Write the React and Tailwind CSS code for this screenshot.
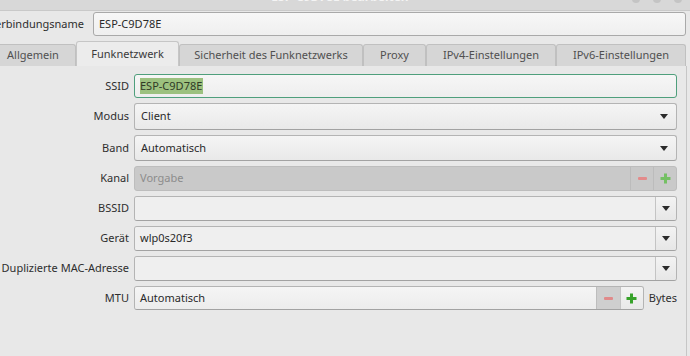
import React from "react";

const font = { fontFamily: '"Noto Sans", "DejaVu Sans", sans-serif' };

function Arrow() {
  return (
    <svg width="8" height="5" viewBox="0 0 8 5" className="block">
      <path d="M0 0H8L4 5Z" fill="#2b2b2b" />
    </svg>
  );
}

function Minus({ color }) {
  return <div className={`w-[9px] h-[3px] rounded-[1px] ${color}`} />;
}

function Plus({ color }) {
  return (
    <svg width="11" height="11" viewBox="0 0 11 11" className="block">
      <path d="M4 0.5h3v3.5h3.5v3H7v3.5H4V7H0.5V4H4Z" fill={color} />
    </svg>
  );
}

function Label({ children }) {
  return (
    <div className="flex justify-end items-center whitespace-nowrap text-[11px] text-[#2e2e2e]">
      {children}
    </div>
  );
}

function Combo({ value }) {
  return (
    <div className="flex items-center h-full rounded-[3px] border border-[#b4b4b4] border-b-[#a2a2a2] bg-gradient-to-b from-[#f5f5f5] to-[#e9e9e9] pl-[6px] pr-[8px]">
      <span className="flex-1 text-[11px] text-[#2a2a2a]">{value}</span>
      <Arrow />
    </div>
  );
}

function ComboEntry({ value }) {
  return (
    <div className="flex h-full rounded-[3px] border border-[#b4b4b4] border-b-[#a2a2a2] overflow-hidden">
      <div className="flex-1 flex items-center bg-[#efefef] pl-[5px] text-[11px] text-[#2a2a2a]">
        {value}
      </div>
      <div className="w-[21px] flex items-center justify-center border-l border-[#c4c4c4] bg-gradient-to-b from-[#f3f3f3] to-[#e7e7e7]">
        <Arrow />
      </div>
    </div>
  );
}

export default function App() {
  return (
    <div style={font} className="w-[690px] h-[356px] bg-[#e8e8e8] overflow-hidden flex flex-col">
      {/* title strip */}
      <div className="h-[11px] bg-[#d8d8d8] border-b border-[#c9c9c9] overflow-hidden relative flex justify-center">
        <div className="-mt-[10px] ml-[-10px] text-[12px] font-bold text-[#f4f4f4] leading-[14px]">
          ESP-C9D78E bearbeiten
        </div>
        <div className="absolute right-[8px] -top-[5px] flex gap-[13px]">
          <div className="w-[8px] h-[8px] rounded-full bg-[#c4c4c4]" />
          <div className="w-[8px] h-[8px] rounded-full bg-[#c4c4c4]" />
          <div className="w-[8px] h-[8px] rounded-full bg-[#c4c4c4]" />
        </div>
      </div>

      {/* Verbindungsname */}
      <div className="flex items-center mt-[1px] h-[24px]">
        <div className="w-[84px] flex justify-end whitespace-nowrap text-[11px] text-[#2e2e2e]">
          Verbindungsname
        </div>
        <div className="ml-[9px] w-[593px] h-[24px] flex items-center rounded-[3px] border border-[#a9a9a9] bg-gradient-to-b from-[#f7f7f7] to-[#efefef] pl-[5px] text-[11px] text-[#2a2a2a]">
          ESP-C9D78E
        </div>
      </div>

      {/* Tabs */}
      <div className="flex items-end mt-[5px] h-[25px] ml-[-10px] w-[696px]">
        <div className="w-[86px] h-[22px] flex items-center justify-center bg-[#d6d6d6] border border-[#c0c0c0] border-b-0 rounded-t-[3px] text-[11px] text-[#505050]">Allgemein</div>
        <div className="w-[103px] h-[25px] flex items-center justify-center bg-[#ececec] border border-[#c6c6c6] border-b-0 rounded-t-[3px] text-[11px] text-[#3a3a3a]">Funknetzwerk</div>
        <div className="w-[184px] h-[22px] flex items-center justify-center bg-[#d6d6d6] border border-[#c0c0c0] border-b-0 rounded-t-[3px] text-[11px] text-[#505050]">Sicherheit des Funknetzwerks</div>
        <div className="w-[63px] h-[22px] flex items-center justify-center bg-[#d6d6d6] border border-[#c0c0c0] border-b-0 rounded-t-[3px] text-[11px] text-[#505050]">Proxy</div>
        <div className="w-[130px] h-[22px] flex items-center justify-center bg-[#d6d6d6] border border-[#c0c0c0] border-b-0 rounded-t-[3px] text-[11px] text-[#505050]">IPv4-Einstellungen</div>
        <div className="w-[130px] h-[22px] flex items-center justify-center bg-[#d6d6d6] border border-[#c0c0c0] border-b-0 rounded-t-[3px] text-[11px] text-[#505050]">IPv6-Einstellungen</div>
      </div>

      {/* Page */}
      <div className="flex-1 w-[687px] border-r border-[#c6c6c6] bg-[#e8e8e8] pt-[8px]">
        <div className="grid grid-cols-[129px_543px] grid-rows-[24px_27px_26px_25px_25px_25px_25px_24px] gap-x-[5px] gap-y-[5px]">
          <Label>SSID</Label>
          <div className="flex items-center h-full rounded-[3px] border border-[#4f9f7c] bg-gradient-to-b from-[#f6f6f6] to-[#eeeeee] pl-[5px]">
            <span className="bg-[#9cc17f] text-[11px] text-[#2f3a26] leading-[16px] pr-[1px]">ESP-C9D78E</span>
          </div>

          <Label>Modus</Label>
          <Combo value="Client" />

          <Label>Band</Label>
          <Combo value="Automatisch" />

          <Label>Kanal</Label>
          <div className="flex h-full rounded-[3px] border border-[#bdbdbd] bg-[#c9c9c9] overflow-hidden">
            <div className="flex-1 flex items-center pl-[5px] text-[11px] text-[#8c8c8c]">Vorgabe</div>
            <div className="w-[23px] flex items-center justify-center border-l border-[#bcbcbc]">
              <Minus color="bg-[#e38b8b]" />
            </div>
            <div className="w-[23px] flex items-center justify-center border-l border-[#bcbcbc]">
              <Plus color="#74c063" />
            </div>
          </div>

          <Label>BSSID</Label>
          <ComboEntry value="" />

          <Label>Gerät</Label>
          <ComboEntry value="wlp0s20f3" />

          <Label>Duplizierte MAC-Adresse</Label>
          <ComboEntry value="" />

          <Label>MTU</Label>
          <div className="flex items-center h-full">
            <div className="w-[511px] flex h-full rounded-[3px] border border-[#b4b4b4] border-b-[#a2a2a2] overflow-hidden">
              <div className="flex-1 flex items-center bg-gradient-to-b from-[#f5f5f5] to-[#ececec] pl-[5px] text-[11px] text-[#2a2a2a]">Automatisch</div>
              <div className="w-[24px] flex items-center justify-center bg-[#cfcfcf] border-l border-[#bdbdbd]">
                <Minus color="bg-[#e08a8a]" />
              </div>
              <div className="w-[23px] flex items-center justify-center bg-gradient-to-b from-[#f3f3f3] to-[#e8e8e8] border-l border-[#c4c4c4]">
                <Plus color="#37a22a" />
              </div>
            </div>
            <span className="ml-[5px] text-[11px] text-[#2e2e2e]">Bytes</span>
          </div>
        </div>
      </div>
    </div>
  );
}
